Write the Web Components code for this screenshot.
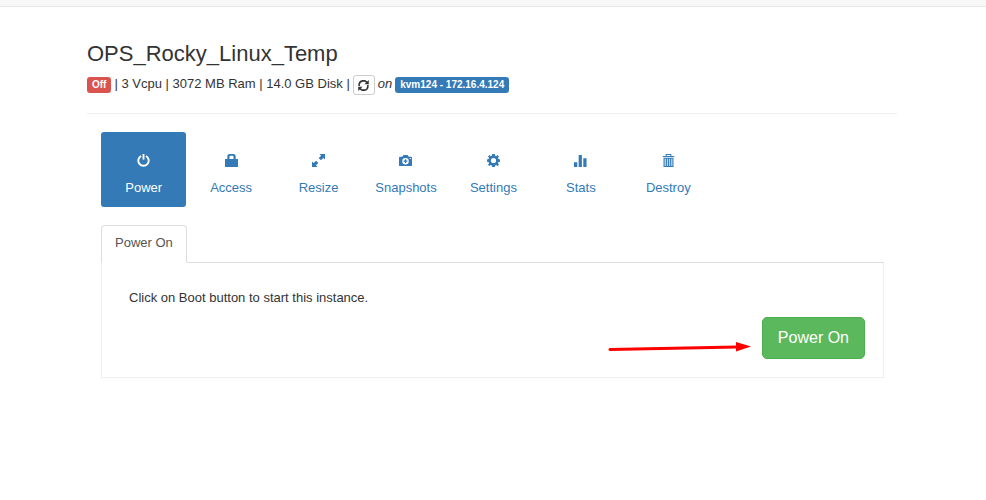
<!DOCTYPE html>
<html lang="en">
<head>
<meta charset="utf-8">
<title>OPS_Rocky_Linux_Temp</title>
<style>
body { margin: 0; background: #fff; color: #333; font: 13px/18px "Liberation Sans", Arial, sans-serif; }
</style>
</head>
<body>
<instance-page></instance-page>
<script>
const ICONS = {
  power: '<path d="M4.400 2.100A5.600 5.600 0 1 0 9.600 2.100" fill="none" stroke="currentColor" stroke-width="2"/><path d="M6 0h2v6H6z"/>',
  lock: '<path d="M0 5.500h2.500V2.500Q2.500 0 5 0h4q2.500 0 2.500 2.500v3H14V14H0zM4.800 5.500h4.400V3Q9.200 2 8.200 2H5.800Q4.800 2 4.800 3z"/>',
  resize: '<path d="M8 0h6v6l-1.800-1.800L9.600 6.800 7.200 4.400l2.600-2.600zM6 14H0V8l1.800 1.800 2.600-2.600 2.400 2.400-2.600 2.600z"/>',
  camera: '<path fill-rule="evenodd" d="M1 3h2.500l1.300-2h4.400l1.300 2H13q1 0 1 1v8q0 1-1 1H1q-1 0-1-1V4q0-1 1-1zM7 4.200a3.500 3.500 0 1 0 0 7 3.500 3.500 0 1 0 0-7zM11.500 4.300v1.200h1.200V4.300zM6.300 5.700h1.400v1.300h1.300v1.400H7.700v1.300H6.300V8.400H5V7h1.300z"/>',
  cog: '<path fill-rule="evenodd" d="M5.600 0h2.800l.4 1.900 1 .4L11.400 1.200l1.500 1.500-1.100 1.600.5 1.200 1.700.3v2.500l-1.700.4-.5 1.200 1.100 1.600-1.500 1.500-1.600-1.100-1 .5-.4 1.600H5.600l-.4-1.600-1-.5-1.600 1.100-1.500-1.500 1.100-1.600-.5-1.200L0 8.300V5.800l1.700-.3.500-1.200-1.100-1.600 1.500-1.500 1.600 1.100 1-.4zM7 4.200a2.800 2.800 0 1 0 0 5.600 2.800 2.800 0 1 0 0-5.600z"/>',
  stats: '<path d="M0 9h3.500v5H0zM5 1h3.500v13H5zM10 4.500h3.500V14H10z"/>',
  trash: '<path d="M2 4.500h10V14H2z" opacity=".3"/><path d="M.8 2.700h12.400M4.500 2.700V.6h5v2.100M2.200 4.500v8.900h9.600V4.500zM4.700 5v8M7 5v8M9.300 5v8" fill="none" stroke="currentColor" stroke-width="1.100"/>',
  refresh: '<path d="M2.300 7.500V6Q2.500 2.500 6 2h2.500l2.700 2M11.700 6.500V8Q11.500 11.500 8 12H5.500l-2.700-2" fill="none" stroke="currentColor" stroke-width="1.700"/><path d="M12.700 1v4.600H8.100zM1.300 13V8.400h4.600z"/>'
};

function define(name, render) {
  customElements.define(name, class extends HTMLElement {
    connectedCallback() {
      if (this.shadowRoot) return;
      this.attachShadow({ mode: 'open' }).innerHTML = render(this);
    }
  });
}

define('glyph-icon', el => `
<style>:host { display: inline-flex; } svg { width: 13px; height: 13px; fill: currentColor; }</style>
<svg viewBox="0 0 14 14" aria-hidden="true">${ICONS[el.getAttribute('name')]}</svg>`);

define('status-label', () => `
<style>
:host { display: inline-block; padding: 0 5px; border-radius: 3px; background: var(--label, #337ab7);
  color: #fff; font-size: 10px; line-height: 16px; font-weight: bold; }
</style><slot></slot>`);

define('instance-header', () => `
<style>
:host { display: block; border-bottom: 1px solid #eee; padding-bottom: 18px; }
h1 { margin: 0 0 8px; font-size: 22px; line-height: 26px; font-weight: 400; }
.specs { display: flex; align-items: center; gap: 3px; height: 20px; }
.off { --label: #d9534f; }
button { display: flex; align-items: center; justify-content: center; width: 22px; height: 20px; padding: 0;
  border: 1px solid #ccc; border-radius: 3px; background: #fff; color: #333; }
.specs > span, em { margin-top: -2px; }
</style>
<h1>OPS_Rocky_Linux_Temp</h1>
<div class="specs">
  <status-label class="off">Off</status-label>
  <span>| 3 Vcpu | 3072 MB Ram | 14.0 GB Disk |</span>
  <button type="button" aria-label="Refresh"><glyph-icon name="refresh"></glyph-icon></button>
  <em>on</em>
  <status-label>kvm124 - 172.16.4.124</status-label>
</div>`);

define('nav-pill', el => `
<style>
:host { display: block; }
a { display: flex; flex-direction: column; align-items: center; gap: 12px; padding: 22px 0 10px;
  border-radius: 3px; color: #337ab7; text-decoration: none; }
:host([active]) a { background: #337ab7; color: #fff; }
</style>
<a href="#${el.getAttribute('icon')}"><glyph-icon name="${el.getAttribute('icon')}"></glyph-icon><slot></slot></a>`);

define('action-nav', () => `
<style>
:host { display: block; }
nav { display: grid; grid-template-columns: repeat(7, 1fr); gap: 2px; max-width: 610px; }
</style>
<nav>
  <nav-pill icon="power" active>Power</nav-pill>
  <nav-pill icon="lock">Access</nav-pill>
  <nav-pill icon="resize">Resize</nav-pill>
  <nav-pill icon="camera">Snapshots</nav-pill>
  <nav-pill icon="cog">Settings</nav-pill>
  <nav-pill icon="stats">Stats</nav-pill>
  <nav-pill icon="trash">Destroy</nav-pill>
</nav>`);

define('power-panel', () => `
<style>
:host { display: block; }
.tabs { display: flex; border-bottom: 1px solid #ddd; }
.tabs a { padding: 8px 13px 10px; margin-bottom: -1px; border: 1px solid #ddd; border-bottom-color: #fff;
  border-radius: 4px 4px 0 0; background: #fff; color: #555; text-decoration: none; }
.body { border: 1px solid #eee; border-top: 0; padding: 26px 18px 18px 27px; }
p { margin: 0 0 10px; }
.action { display: flex; justify-content: flex-end; align-items: center; gap: 11px; }
svg { width: 144px; height: 14px; margin-top: 18px; }
button { height: 42px; padding: 0 15px; border: 1px solid #4cae4c; border-radius: 5px; background: #5cb85c;
  color: #fff; font: inherit; font-size: 16px; }
</style>
<div class="tabs"><a href="#poweron">Power On</a></div>
<div class="body">
  <p>Click on Boot button to start this instance.</p>
  <div class="action">
    <svg viewBox="0 0 144 14" aria-hidden="true"><path d="M3 9.500L130 7" stroke="#f00" stroke-width="3" stroke-linecap="round"/><path d="M129 2l15 4.500-15 5z" fill="#f00"/></svg>
    <button type="button">Power On</button>
  </div>
</div>`);

define('instance-page', () => `
<style>
:host { display: block; }
.bar { height: 6px; background: #f8f8f8; border-bottom: 1px solid #e7e7e7; }
main { max-width: 810px; margin: 0 auto; padding: 34px 89px 0 87px; }
.content { padding: 18px 13px 0 14px; }
power-panel { margin-top: 18px; }
</style>
<div class="bar"></div>
<main>
  <instance-header></instance-header>
  <div class="content">
    <action-nav></action-nav>
    <power-panel></power-panel>
  </div>
</main>`);
</script>
</body>
</html>
